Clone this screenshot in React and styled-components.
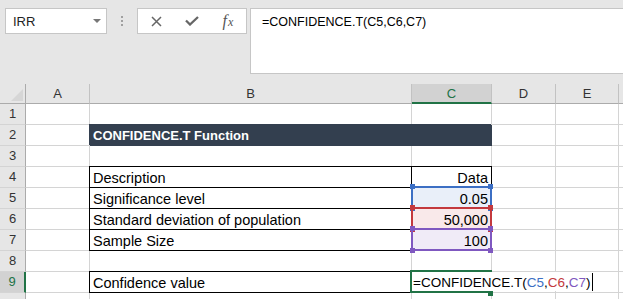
import React from 'react';
import styled, { createGlobalStyle, css } from 'styled-components';

const GRID = '#d4d4d4';
const HEAD_BG = '#e6e6e6';
const HEAD_SEL = '#d2d2d2';
const HEAD_LINE = '#ababab';
const GREEN = '#217346';
const DARK = '#333f4f';

const REFS = {
  blue: { line: '#3c6fc4', fill: '#e9eff9' },
  red: { line: '#c3393e', fill: '#f9e9ea' },
  purple: { line: '#7f58c0', fill: '#f0ebf7' },
};

const GlobalStyle = createGlobalStyle`
  html, body {
    margin: 0;
    padding: 0;
    background: #fff;
    overflow: hidden;
  }
  body {
    font-family: "Liberation Sans", Arial, sans-serif;
  }
`;

const Window = styled.div`
  width: 623px;
  height: 299px;
  overflow: hidden;
`;

const TopBand = styled.div`
  height: 84px;
  box-sizing: border-box;
  background: ${HEAD_BG};
  display: flex;
  align-items: flex-start;
  padding: 8px 0 0 5px;
`;

const NameBox = styled.div`
  width: 102px;
  height: 26px;
  box-sizing: border-box;
  border: 1px solid #c6c6c6;
  background: #fff;
  display: flex;
  align-items: center;
  justify-content: space-between;
  padding: 0 5px 0 7px;
  font-size: 13px;
  color: #222;
`;

const Caret = styled.span`
  width: 0;
  height: 0;
  border-left: 4px solid transparent;
  border-right: 4px solid transparent;
  border-top: 4px solid #777;
`;

const Grip = styled.div`
  margin: 8px 0 0 14px;
  display: flex;
  flex-direction: column;
  gap: 2px;
`;

const Dot = styled.span`
  width: 2px;
  height: 2px;
  background: #a0a0a0;
`;

const FxBox = styled.div`
  margin-left: 14px;
  width: 110px;
  height: 26px;
  box-sizing: border-box;
  border: 1px solid #c6c6c6;
  background: #fff;
  display: grid;
  grid-template-columns: repeat(3, 36px);
  align-items: center;
  justify-items: center;
`;

const FxLabel = styled.span`
  font-family: "Liberation Serif", "Times New Roman", serif;
  font-style: italic;
  color: #555;
  font-size: 16px;
  line-height: 1;
  & > small {
    font-size: 12px;
    margin-left: 1px;
  }
`;

const FormulaBar = styled.div`
  margin-left: 3px;
  flex: 1;
  height: 66px;
  box-sizing: border-box;
  border: 1px solid #c6c6c6;
  border-right: none;
  background: #fff;
  padding: 4px 0 0 11px;
  font-size: 12.5px;
  line-height: 18px;
  color: #000;
  white-space: nowrap;
`;

const Sheet = styled.div`
  display: grid;
  grid-template-columns: 26px 64px 322px 80px 64px 63px 1fr;
  grid-template-rows: 20px;
  grid-auto-rows: 21px;
`;

const Corner = styled.div`
  position: relative;
  background: ${HEAD_BG};
  border-right: 1px solid ${HEAD_LINE};
  border-bottom: 1px solid ${HEAD_LINE};
  &::after {
    content: '';
    position: absolute;
    right: 2px;
    bottom: 2px;
    width: 12px;
    height: 12px;
    background: #d6d6d6;
    clip-path: polygon(100% 0, 100% 100%, 0 100%);
  }
`;

const ColHead = styled.div`
  background: ${(p) => (p.$selected ? HEAD_SEL : HEAD_BG)};
  border-right: 1px solid #c2c2c2;
  border-bottom: ${(p) => (p.$selected ? `2px solid ${GREEN}` : `1px solid ${HEAD_LINE}`)};
  color: ${(p) => (p.$selected ? GREEN : '#333')};
  font-size: 13px;
  line-height: 20px;
  text-align: center;
`;

const RowHead = styled.div`
  background: ${(p) => (p.$selected ? HEAD_SEL : HEAD_BG)};
  border-right: ${(p) => (p.$selected ? `2px solid ${GREEN}` : `1px solid ${HEAD_LINE}`)};
  border-bottom: 1px solid ${GRID};
  color: ${(p) => (p.$selected ? GREEN : '#333')};
  font-size: 13px;
  line-height: 20px;
  text-align: center;
`;

const Cell = styled.div`
  position: relative;
  min-width: 0;
  padding: 1px 3px 0;
  border-right: 1px solid ${(p) => (p.$dark ? DARK : GRID)};
  border-bottom: 1px solid ${(p) => (p.$dark ? DARK : GRID)};
  background: ${(p) => (p.$dark ? DARK : p.$fill || '#fff')};
  box-shadow: ${(p) => (p.$dark ? `-1px -1px 0 0 ${DARK}` : 'none')};
  color: ${(p) => (p.$dark ? '#fff' : '#000')};
  font-size: ${(p) => (p.$dark ? '13px' : '14.5px')};
  font-weight: ${(p) => (p.$dark ? 700 : 400)};
  line-height: 20px;
  text-align: ${(p) => p.$align || 'left'};
  white-space: nowrap;
  ${(p) =>
    p.$boxed &&
    css`
      &::after {
        content: '';
        position: absolute;
        left: -1px;
        top: -1px;
        right: -1px;
        bottom: -1px;
        border: 1px solid #000;
        z-index: 1;
        pointer-events: none;
      }
    `}
`;

const RefFrame = styled.span`
  position: absolute;
  left: -1px;
  top: -2px;
  right: -1px;
  bottom: -1px;
  border: 2px solid ${(p) => p.$color};
  z-index: 2;
`;

const Handle = styled.span`
  position: absolute;
  width: 5px;
  height: 5px;
  background: ${(p) => p.$color};
  ${(p) => p.$x}: -3px;
  ${(p) => p.$y}: -4px;
`;

const ActiveFrame = styled.span`
  position: absolute;
  left: -2px;
  top: -2px;
  right: -1px;
  bottom: -1px;
  border: 2px solid ${GREEN};
  z-index: 3;
`;

const FillHandle = styled.span`
  position: absolute;
  right: -3px;
  bottom: -5px;
  width: 5px;
  height: 5px;
  background: ${GREEN};
`;

const Editor = styled.span`
  position: absolute;
  left: 0;
  top: 0;
  height: 19px;
  box-sizing: border-box;
  padding: 1px 2px 0 1px;
  background: #fff;
  display: flex;
  align-items: flex-start;
  font-size: 13.5px;
  line-height: 19px;
  color: #000;
  z-index: 4;
`;

const RefText = styled.span`
  color: ${(p) => p.$c};
`;

const Cursor = styled.span`
  width: 1px;
  height: 18px;
  margin: 0 0 0 2px;
  background: #000;
`;

const columns = ['A', 'B', 'C', 'D', 'E', ''];

const rows = [
  { n: 1 },
  { n: 2, b: 'CONFIDENCE.T Function', dark: true },
  { n: 3 },
  { n: 4, b: 'Description', c: 'Data', boxed: true },
  { n: 5, b: 'Significance level', c: '0.05', boxed: true, ref: 'blue' },
  { n: 6, b: 'Standard deviation of population', c: '50,000', boxed: true, ref: 'red' },
  { n: 7, b: 'Sample Size', c: '100', boxed: true, ref: 'purple' },
  { n: 8 },
  { n: 9, b: 'Confidence value', boxed: true, editing: true },
  { n: null },
];

const RefBox = ({ color }) => (
  <RefFrame $color={color}>
    <Handle $color={color} $x="left" $y="top" />
    <Handle $color={color} $x="right" $y="top" />
    <Handle $color={color} $x="left" $y="bottom" />
    <Handle $color={color} $x="right" $y="bottom" />
  </RefFrame>
);

const SheetRow = ({ row }) => {
  const ref = row.ref ? REFS[row.ref] : null;
  return (
    <>
      <RowHead $selected={row.editing}>{row.n}</RowHead>
      <Cell />
      <Cell $dark={row.dark} $boxed={row.boxed}>
        {row.b}
      </Cell>
      <Cell $dark={row.dark} $boxed={row.boxed} $align="right" $fill={ref && ref.fill}>
        {row.c}
        {ref && <RefBox color={ref.line} />}
        {row.editing && (
          <>
            <ActiveFrame>
              <FillHandle />
            </ActiveFrame>
            <Editor>
              =CONFIDENCE.T(
              <RefText $c={REFS.blue.line}>C5</RefText>,
              <RefText $c={REFS.red.line}>C6</RefText>,
              <RefText $c={REFS.purple.line}>C7</RefText>)
              <Cursor />
            </Editor>
          </>
        )}
      </Cell>
      <Cell />
      <Cell />
      <Cell />
    </>
  );
};

export default function App() {
  return (
    <Window>
      <GlobalStyle />
      <TopBand>
        <NameBox>
          IRR
          <Caret />
        </NameBox>
        <Grip>
          <Dot />
          <Dot />
          <Dot />
        </Grip>
        <FxBox>
          <svg width="11" height="11" viewBox="0 0 11 11">
            <path d="M1 1 L10 10 M10 1 L1 10" stroke="#666" strokeWidth="1.5" fill="none" />
          </svg>
          <svg width="14" height="10" viewBox="0 0 14 10">
            <path d="M1 4.5 L5 8.5 L13 1" stroke="#666" strokeWidth="2.3" fill="none" />
          </svg>
          <FxLabel>
            f<small>x</small>
          </FxLabel>
        </FxBox>
        <FormulaBar>=CONFIDENCE.T(C5,C6,C7)</FormulaBar>
      </TopBand>
      <Sheet>
        <Corner />
        {columns.map((col) => (
          <ColHead key={col || 'F'} $selected={col === 'C'}>
            {col}
          </ColHead>
        ))}
        {rows.map((row, i) => (
          <SheetRow key={i} row={row} />
        ))}
      </Sheet>
    </Window>
  );
}
